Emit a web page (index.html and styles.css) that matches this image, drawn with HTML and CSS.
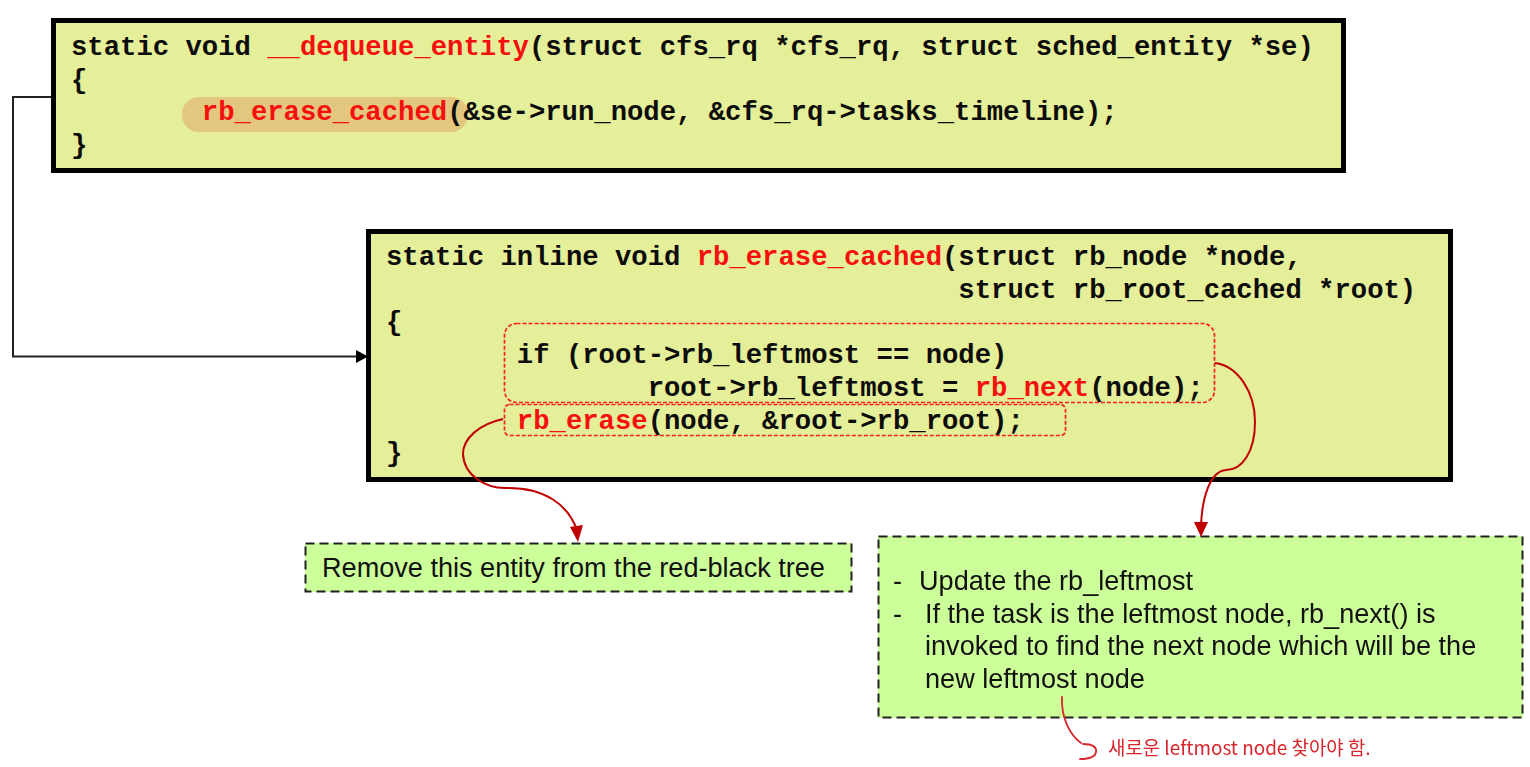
FILE: index.html
```html
<!DOCTYPE html>
<html lang="en">
<head>
<meta charset="utf-8">
<title>__dequeue_entity</title>
<link rel="stylesheet" href="styles.css">
</head>
<body>
<main class="canvas">
  <section class="code-box box-top">
    <pre class="code">static void <b class="fn">__dequeue_entity</b>(struct cfs_rq *cfs_rq, struct sched_entity *se)
{
        <span class="pill"></span><b class="fn">rb_erase_cached</b>(&amp;se-&gt;run_node, &amp;cfs_rq-&gt;tasks_timeline);
}</pre>
  </section>

  <section class="code-box box-mid">
    <pre class="code">static inline void <b class="fn">rb_erase_cached</b>(struct rb_node *node,
                                   struct rb_root_cached *root)
{
        if (root-&gt;rb_leftmost == node)
                root-&gt;rb_leftmost = <b class="fn">rb_next</b>(node);
        <b class="fn">rb_erase</b>(node, &amp;root-&gt;rb_root);
}</pre>
  </section>

  <aside class="note note-small">Remove this entity from the red-black tree</aside>

  <aside class="note note-big">
    <ul class="dash-list">
      <li class="tight">Update the rb_leftmost</li>
      <li>If the task is the leftmost node, rb_next() is invoked to find the next node which will be the new leftmost node</li>
    </ul>
  </aside>

  <svg class="wires" width="1530" height="767" viewBox="0 0 1530 767" aria-hidden="true">
    <rect class="dash-red" x="504.5" y="323.5" width="710" height="79" rx="12"/>
    <rect class="dash-red" x="504.5" y="404.5" width="561" height="31" rx="5"/>
    <rect class="dash-black" x="305.5" y="543.5" width="546" height="48"/>
    <rect class="dash-black" x="878.5" y="536.5" width="644" height="181"/>
    <path class="wire-black" d="M51 97H13V356.500H358"/>
    <path class="head-black" d="M356 350L368 356.500L356 363Z"/>
    <path class="wire-red" d="M1215 363C1238 366 1255 392 1255 422C1255 452 1242 470 1226 470C1210 471 1202 498 1201 526"/>
    <path class="head-red" d="M1194 522H1208L1201 537Z"/>
    <path class="wire-red" d="M503 419C480 424 463 438 463 454C464 476 486 488 505 488C545 487 568 505 577 530"/>
    <path class="head-red" d="M570 527L583 525L578 542Z"/>
    <path class="wire-hand" d="M1062 697C1061 718 1070 735 1081 743M1083 744C1092 744 1097 747 1096 752C1095 758 1088 759 1080 759"/>
  </svg>

  <p class="scrawl">새로운 leftmost node 찾아야 함.</p>
</main>
</body>
</html>
```
FILE: styles.css
```css
html, body {
  margin: 0;
  padding: 0;
  background: #fff;
}

.canvas {
  position: relative;
  width: 1530px;
  height: 767px;
  overflow: hidden;
  filter: blur(0.6px);
}

.code-box {
  position: absolute;
  box-sizing: border-box;
  border: 5px solid #000;
  background: #e5ee98;
  padding: 8px 0 0 15px;
  isolation: isolate;
}

.box-top {
  left: 51px;
  top: 18px;
  width: 1295px;
  height: 155px;
  padding-top: 9px;
}

.box-mid {
  left: 366px;
  top: 229px;
  width: 1087px;
  height: 253px;
}

.code {
  position: relative;
  margin: 0;
  font-family: "Liberation Mono", monospace;
  font-size: 27.25px;
  font-weight: 700;
  line-height: 32.7px;
  color: #0c0c0c;
}

.fn {
  color: #f60f0f;
}

.pill {
  position: absolute;
  z-index: -1;
  left: 111px;
  top: 65px;
  width: 286px;
  height: 35px;
  border-radius: 17px;
  background: #e4c77e;
}

.note {
  position: absolute;
  box-sizing: border-box;
  background: #ccff99;
  font-family: "Liberation Sans", Arial, sans-serif;
  font-size: 27.1px;
  line-height: 32.6px;
  color: #111;
}

.note-small {
  left: 305px;
  top: 543px;
  width: 547px;
  height: 49px;
  padding: 9px 0 0 17px;
  white-space: nowrap;
}

.note-big {
  left: 878px;
  top: 536px;
  width: 645px;
  height: 182px;
  padding: 29px 30px 0 15px;
}

.dash-list {
  margin: 0;
  padding: 0;
  list-style: none;
}

.dash-list li {
  position: relative;
  padding-left: 32px;
}

.dash-list li.tight {
  padding-left: 26px;
}

.dash-list li::before {
  content: "-";
  position: absolute;
  left: 0;
}

.wires {
  position: absolute;
  left: 0;
  top: 0;
  pointer-events: none;
}

.dash-red {
  fill: none;
  stroke: #f52020;
  stroke-width: 1.7;
  stroke-dasharray: 4 2;
}

.dash-black {
  fill: none;
  stroke: #222;
  stroke-width: 2;
  stroke-dasharray: 9 5;
}

.wire-black {
  fill: none;
  stroke: #222;
  stroke-width: 2;
}

.head-black {
  fill: #000;
}

.wire-red {
  fill: none;
  stroke: #c00000;
  stroke-width: 2;
}

.head-red {
  fill: #c00000;
}

.wire-hand {
  fill: none;
  stroke: #d8262c;
  stroke-width: 1.8;
  stroke-linecap: round;
}

.scrawl {
  position: absolute;
  left: 1108px;
  top: 734px;
  margin: 0;
  font-family: "Noto Sans CJK KR", "Noto Sans", sans-serif;
  font-size: 18.9px;
  font-weight: 400;
  line-height: 26px;
  color: #d8262c;
  white-space: nowrap;
}
```
